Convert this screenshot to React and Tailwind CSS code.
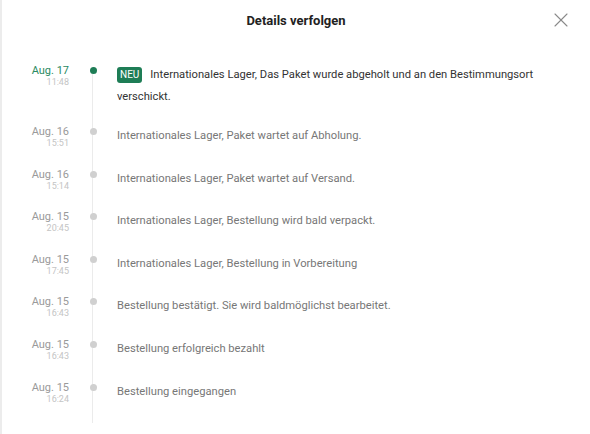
import { X } from "lucide-react";

const events = [
  { date: "Aug. 16", time: "15:51", text: "Internationales Lager, Paket wartet auf Abholung." },
  { date: "Aug. 16", time: "15:14", text: "Internationales Lager, Paket wartet auf Versand." },
  { date: "Aug. 15", time: "20:45", text: "Internationales Lager, Bestellung wird bald verpackt." },
  { date: "Aug. 15", time: "17:45", text: "Internationales Lager, Bestellung in Vorbereitung" },
  { date: "Aug. 15", time: "16:43", text: "Bestellung bestätigt. Sie wird baldmöglichst bearbeitet." },
  { date: "Aug. 15", time: "16:43", text: "Bestellung erfolgreich bezahlt" },
  { date: "Aug. 15", time: "16:24", text: "Bestellung eingegangen" },
];

const App = () => {
  return (
    <div className="w-[590px] h-[434px] overflow-hidden bg-white border-l-2 border-[#ececec] font-['Roboto',sans-serif]">
      <div className="relative flex h-[41px] items-center justify-center">
        <h2 className="text-[13px] font-bold text-[#222]">Details verfolgen</h2>
        <button className="absolute right-[17px] top-[8px] text-[#8a8a8a]">
          <X size={24} strokeWidth={1.1} />
        </button>
      </div>

      <div className="relative pt-[23px]">
        <div className="absolute left-[90px] top-[30px] h-[352px] w-px bg-[#ebebeb]" />

        <div className="flex pb-[17px]">
          <div className="flex w-[67px] flex-col items-end">
            <span className="text-[11px] leading-[13px] text-[#2a8a62]">Aug. 17</span>
            <span className="text-[9px] leading-[11px] text-[#c4c4c4]">11:48</span>
          </div>
          <div className="flex w-[48px] justify-center">
            <span className="relative mt-[3px] h-[7px] w-[7px] rounded-full bg-[#1e7d56]" />
          </div>
          <p className="flex-1 pr-[36px] text-[11.2px] leading-[22px] text-[#333]">
            <span className="mr-[8px] inline-block rounded-[3px] bg-[#1e7d56] px-[3px] align-middle text-[10px] leading-[16px] text-white">
              NEU
            </span>
            Internationales Lager, Das Paket wurde abgeholt und an den Bestimmungsort verschickt.
          </p>
        </div>

        {events.map((e, i) => (
          <div key={i} className="flex h-[42.6px]">
            <div className="flex w-[67px] flex-col items-end">
              <span className="text-[11px] leading-[13px] text-[#9a9a9a]">{e.date}</span>
              <span className="text-[9px] leading-[11px] text-[#c4c4c4]">{e.time}</span>
            </div>
            <div className="flex w-[48px] justify-center">
              <span className="relative mt-[3px] h-[7px] w-[7px] rounded-full bg-[#d0d0d0]" />
            </div>
            <p className="flex-1 pr-[36px] text-[11.2px] leading-[22px] text-[#777]">{e.text}</p>
          </div>
        ))}
      </div>
    </div>
  );
};

export default App;
